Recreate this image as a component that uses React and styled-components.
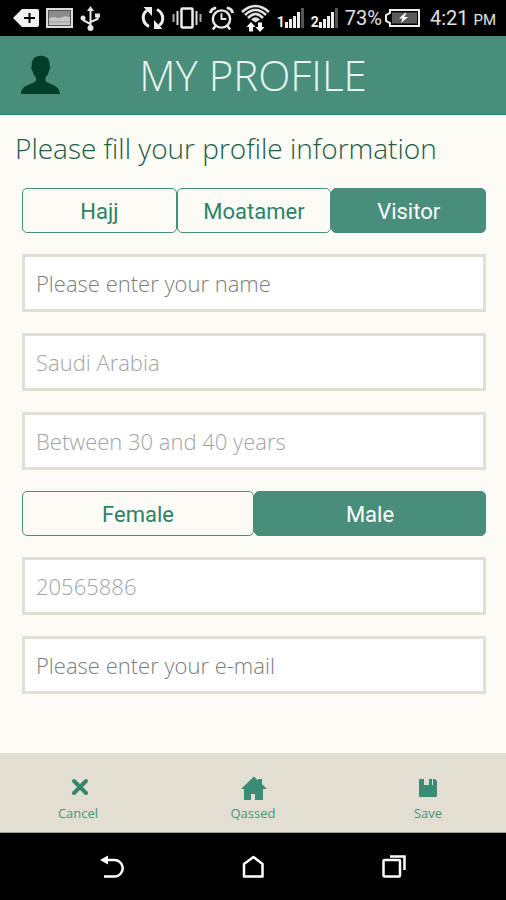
import React, { useState } from 'react';
import styled, { createGlobalStyle, css } from 'styled-components';

const GlobalStyle = createGlobalStyle`
  :root {
    --green: #488e7b;
    --green-text: #2c8367;
    --dark-green: #003e2b;
    --cream: #fcfbf6;
    --sand: #e3ded2;
    --sand-border: #dfdfd2;
    --font-light: 'Open Sans', 'Noto Sans', sans-serif;
    --font-ui: Roboto, 'Liberation Sans', sans-serif;
  }

  * {
    box-sizing: border-box;
  }

  body {
    margin: 0;
    background: var(--cream);
  }

  button,
  input,
  select {
    margin: 0;
    font: inherit;
  }

  svg {
    display: block;
    flex: none;
  }
`;

const Screen = styled.div`
  display: flex;
  flex-direction: column;
  min-height: 100vh;
  background: var(--cream);
  font-family: var(--font-light);
  font-weight: 300;
`;

const StatusBar = styled.div`
  display: flex;
  justify-content: space-between;
  align-items: center;
  height: 36px;
  padding: 0 10px 0 13px;
  background: #000;
  color: #e2e2e2;
  font-family: var(--font-ui);
  font-size: 20px;
  font-weight: 400;
`;

const StatusGroup = styled.div`
  display: flex;
  align-items: center;
  gap: 7px;
`;

const Battery = styled.span`
  display: flex;
  align-items: center;
  gap: 3px;
`;

const Clock = styled.span`
  margin-left: 3px;
  white-space: nowrap;

  small {
    font-size: 15px;
  }
`;

const Header = styled.header`
  display: grid;
  grid-template-columns: 40px 1fr 40px;
  align-items: center;
  height: 79px;
  padding: 0 20px;
  background: var(--green);
  border-bottom: 1px solid #2c826b;

  h1 {
    margin: 0;
    color: #eaf3ef;
    font-size: 42px;
    font-weight: 300;
    line-height: 60px;
    text-align: center;
  }
`;

const Main = styled.main`
  flex: 1;
  padding: 13px 0 21px;
`;

const Intro = styled.p`
  margin: 0 0 20px;
  padding: 0 15px;
  color: #215c48;
  font-size: 28px;
  line-height: 40px;
`;

const Form = styled.form`
  display: flex;
  flex-direction: column;
  gap: 21px;
  padding: 0 20px 0 22px;
`;

const Segments = styled.div`
  display: flex;
  height: 45px;
`;

const Segment = styled.button`
  flex: 1 1 0;
  padding: 2px 0 0;
  border: 1px solid var(--green);
  border-radius: 5px;
  background: ${({ $active }) => ($active ? 'var(--green)' : 'transparent')};
  color: ${({ $active }) => ($active ? '#fff' : 'var(--green-text)')};
  font-family: var(--font-ui);
  font-size: 22px;
  font-weight: 400;
`;

const field = css`
  width: 100%;
  height: 58px;
  padding: 0 11px;
  border: 3px solid var(--sand-border);
  border-radius: 0;
  outline: 0;
  background: #fff;
  color: #a3a3a3;
  font-size: 22px;
`;

const TextField = styled.input`
  ${field}

  &::placeholder {
    color: ${({ $muted }) => ($muted ? '#a3a3a3' : '#7c7c7c')};
    opacity: 1;
  }
`;

const SelectField = styled.select`
  ${field}
  appearance: none;
`;

const Toolbar = styled.footer`
  display: flex;
  justify-content: space-between;
  height: 80px;
  padding: 0 38px;
  background: var(--sand);
  border-bottom: 1px solid #a29e94;
`;

const ToolbarButton = styled.button`
  display: flex;
  flex-direction: column;
  align-items: center;
  gap: 4px;
  width: 80px;
  padding: 21px 0 0;
  border: 0;
  background: none;
  color: #4a947c;
  font-size: 13px;
  font-weight: 400;
  line-height: 18px;
`;

const NavBar = styled.nav`
  display: flex;
  justify-content: space-between;
  height: 67px;
  padding: 0 82px;
  background: #000;
`;

const NavButton = styled.button`
  display: flex;
  justify-content: center;
  align-items: center;
  width: 60px;
  padding: 0;
  border: 0;
  background: none;
`;

const IconTag = () => (
  <svg width="26" height="18" viewBox="0 0 26 18" aria-hidden="true">
    <path d="M0 9 9 0H24Q26 0 26 2V16Q26 18 24 18H9Z" fill="#f2f2f2" />
    <path d="M16.500 4v10M11 9h11" stroke="#000" strokeWidth="2" />
  </svg>
);

const IconPicture = () => (
  <svg width="27" height="20" viewBox="0 0 27 20" aria-hidden="true">
    <rect x="1" y="1" width="25" height="18" fill="#555" stroke="#ddd" strokeWidth="2" />
    <path d="M3 3h21v6l-5-1-6 2-5-1-5 2Z" fill="#8b8b8b" />
    <path d="M3 10l5-1 5 1 6-2 5 1v8H3Z" fill="#c4c4c4" />
    <path d="M3 14h21" stroke="#999" strokeWidth="1" />
  </svg>
);

const IconUsb = () => (
  <svg width="20" height="25" viewBox="0 0 20 25" aria-hidden="true">
    <g fill="none" stroke="#e6e6e6" strokeWidth="2">
      <path d="M10.500 4v17M10.500 18 3.500 14.500V12M10.500 16 17.500 13V10" />
    </g>
    <g fill="#e6e6e6">
      <path d="m10.500 0 3.500 5H7Z" />
      <circle cx="3" cy="12" r="2.500" />
      <path d="M15 7.500h5v4h-5Z" />
      <circle cx="10.500" cy="22" r="3" />
    </g>
  </svg>
);

const IconSync = () => (
  <svg width="24" height="24" viewBox="0 0 24 24" aria-hidden="true">
    <g fill="none" stroke="#eee" strokeWidth="3">
      <path d="M8 20.500C1 17 .5 8 6 4.500" />
      <path d="M16 3.500C23 7 23.500 16 18 19.500" />
    </g>
    <path d="M2.500 1H11v9ZM21.500 23H13v-9Z" fill="#eee" />
  </svg>
);

const IconVibrate = () => (
  <svg width="30" height="22" viewBox="0 0 30 22" aria-hidden="true">
    <rect x="9.500" y="1.500" width="11" height="19" rx="1" fill="none" stroke="#eee" strokeWidth="2.500" />
    <path d="M5.500 4v14M24.500 4v14" stroke="#ddd" strokeWidth="2" />
    <path d="M1.500 7v8M28.500 7v8" stroke="#aaa" strokeWidth="2" />
  </svg>
);

const IconAlarm = () => (
  <svg width="25" height="25" viewBox="0 0 26 25" aria-hidden="true">
    <g fill="none" stroke="#e8e8e8">
      <circle cx="13" cy="13" r="9" strokeWidth="2.500" />
      <path d="M13 7v6h5" strokeWidth="2" />
      <path d="M1.500 7Q2 2 7.500 1.500M24.500 7Q24 2 18.500 1.500" strokeWidth="3" />
      <path d="m7 20-3 4M19 20l3 4" strokeWidth="2.500" />
    </g>
  </svg>
);

const IconWifi = () => (
  <svg width="29" height="28" viewBox="0 0 29 28" aria-hidden="true">
    <g fill="none" stroke="#e2e2e2" strokeWidth="2.600">
      <path d="M1 8Q14.500-4 28 8" />
      <path d="M4 11Q14.500 1 25 11" />
      <path d="M7 14Q14.500 6 22 14" />
    </g>
    <path d="M10 15.500q4.500-4.500 9 0l-4.500 3Z" fill="#e2e2e2" />
    <path d="m10 18 4.500 5H12v4.500H8V23H5.500ZM19 28l-4.500-5H17v-4.500h4V23h2.500Z" fill="#fff" />
  </svg>
);

const SignalBox = styled.span`
  display: flex;
  align-items: flex-end;
  height: 22px;
  color: #eee;
  font-size: 14px;
  font-weight: 700;
  line-height: 14px;
`;

const Signal = ({ slot }) => (
  <SignalBox>
    {slot}
    <svg width="19" height="21" viewBox="0 0 19 21" aria-hidden="true">
      <path d="M0 14h3v6H0ZM4 11h3v9H4ZM8 8h3v12H8ZM12 4h3v16h-3Z" fill="#eee" />
      <path d="M16 0h3v20h-3Z" fill="#555" />
    </svg>
  </SignalBox>
);

const IconBattery = () => (
  <svg width="35" height="18" viewBox="0 0 35 18" aria-hidden="true">
    <path d="M5 1h29v16H5v-3L1 12V6l4-2Z" fill="none" stroke="#eee" strokeWidth="2" />
    <path d="M7 3.500h25v11H7Z" fill="#5a5a5a" />
    <path d="m20 4-6 5.500h3.500L16 14l7-6h-4l2.500-4Z" fill="#fff" />
  </svg>
);

const IconPerson = () => (
  <svg width="40" height="40" viewBox="0 0 40 40" aria-hidden="true">
    <path
      d="M21 .8c6 0 9.200 4 8.700 10.200 1 .7.700 3.700-.8 5-.5 3-1.700 4.600-3.400 6.500v3.500C29 29.500 40 30 40 39H1c0-9 11-9.500 15-13v-3.500c-1.700-1.900-2.900-3.500-3.400-6.500-1.500-1.300-1.800-4.300-.8-5C11.300 4.800 14.500.8 21 .8Z"
      fill="var(--dark-green)"
    />
  </svg>
);

const IconClose = () => (
  <svg width="26" height="26" viewBox="0 0 26 26" aria-hidden="true">
    <path d="m9 7 12 12M21 7 9 19" stroke="#36856f" strokeWidth="4" strokeLinecap="round" />
  </svg>
);

const IconHouse = () => (
  <svg width="28" height="26" viewBox="0 0 28 26" aria-hidden="true">
    <path d="M15 2.500 2 15h3v11h7v-6h4v6h8V15h4l-5-5V5h-4v1.500Z" fill="#3c8b74" />
  </svg>
);

const IconDisk = () => (
  <svg width="26" height="26" viewBox="0 0 26 26" aria-hidden="true">
    <path d="M5 5h4v6h5V5h3v6h1V5h2l2 2V22q0 1-1 1H5q-1 0-1-1V6q0-1 1-1Z" fill="#3c8b74" />
  </svg>
);

const IconBack = () => (
  <svg width="26" height="26" viewBox="0 0 26 26" aria-hidden="true">
    <path d="M6 6h9a8 8 0 0 1 1 16.500H5" fill="none" stroke="#fff" strokeWidth="2.500" />
    <path d="M1 6 9 1.500v9Z" fill="#fff" />
  </svg>
);

const IconHome = () => (
  <svg width="26" height="26" viewBox="0 0 26 26" aria-hidden="true">
    <path d="M4 22.500V10L13.500 3l9 7v12.500Z" fill="none" stroke="#fff" strokeWidth="2.500" strokeLinejoin="round" />
  </svg>
);

const IconRecent = () => (
  <svg width="26" height="26" viewBox="0 0 26 26" aria-hidden="true">
    <g fill="none" stroke="#fff">
      <rect x="2.500" y="6" width="16.500" height="16.500" rx="1" strokeWidth="2.500" />
      <path d="M9 2.500h14.500V16" strokeWidth="2.500" />
    </g>
  </svg>
);

const SegmentedControl = ({ label, options, initial }) => {
  const [value, setValue] = useState(initial);

  return (
    <Segments role="group" aria-label={label}>
      {options.map((option) => (
        <Segment
          key={option}
          type="button"
          $active={option === value}
          aria-pressed={option === value}
          onClick={() => setValue(option)}
        >
          {option}
        </Segment>
      ))}
    </Segments>
  );
};

const App = () => (
  <>
    <GlobalStyle />
    <Screen>
      <StatusBar>
        <StatusGroup>
          <IconTag />
          <IconPicture />
          <IconUsb />
        </StatusGroup>
        <StatusGroup>
          <IconSync />
          <IconVibrate />
          <IconAlarm />
          <IconWifi />
          <Signal slot="1" />
          <Signal slot="2" />
          <Battery>
            73%
            <IconBattery />
          </Battery>
          <Clock>
            4:21 <small>PM</small>
          </Clock>
        </StatusGroup>
      </StatusBar>

      <Header>
        <IconPerson />
        <h1>MY PROFILE</h1>
      </Header>

      <Main>
        <Intro>Please fill your profile information</Intro>
        <Form onSubmit={(e) => e.preventDefault()}>
          <SegmentedControl
            label="Pilgrim type"
            options={['Hajj', 'Moatamer', 'Visitor']}
            initial="Visitor"
          />
          <TextField type="text" aria-label="Name" placeholder="Please enter your name" />
          <SelectField aria-label="Country">
            <option>Saudi Arabia</option>
          </SelectField>
          <SelectField aria-label="Age">
            <option>Between 30 and 40 years</option>
          </SelectField>
          <SegmentedControl label="Gender" options={['Female', 'Male']} initial="Male" />
          <TextField type="tel" aria-label="Phone" placeholder="20565886" $muted />
          <TextField type="email" aria-label="E-mail" placeholder="Please enter your e-mail" />
        </Form>
      </Main>

      <Toolbar>
        <ToolbarButton type="button">
          <IconClose />
          Cancel
        </ToolbarButton>
        <ToolbarButton type="button">
          <IconHouse />
          Qassed
        </ToolbarButton>
        <ToolbarButton type="button">
          <IconDisk />
          Save
        </ToolbarButton>
      </Toolbar>

      <NavBar>
        <NavButton type="button" aria-label="Back">
          <IconBack />
        </NavButton>
        <NavButton type="button" aria-label="Home">
          <IconHome />
        </NavButton>
        <NavButton type="button" aria-label="Recent apps">
          <IconRecent />
        </NavButton>
      </NavBar>
    </Screen>
  </>
);

export default App;
